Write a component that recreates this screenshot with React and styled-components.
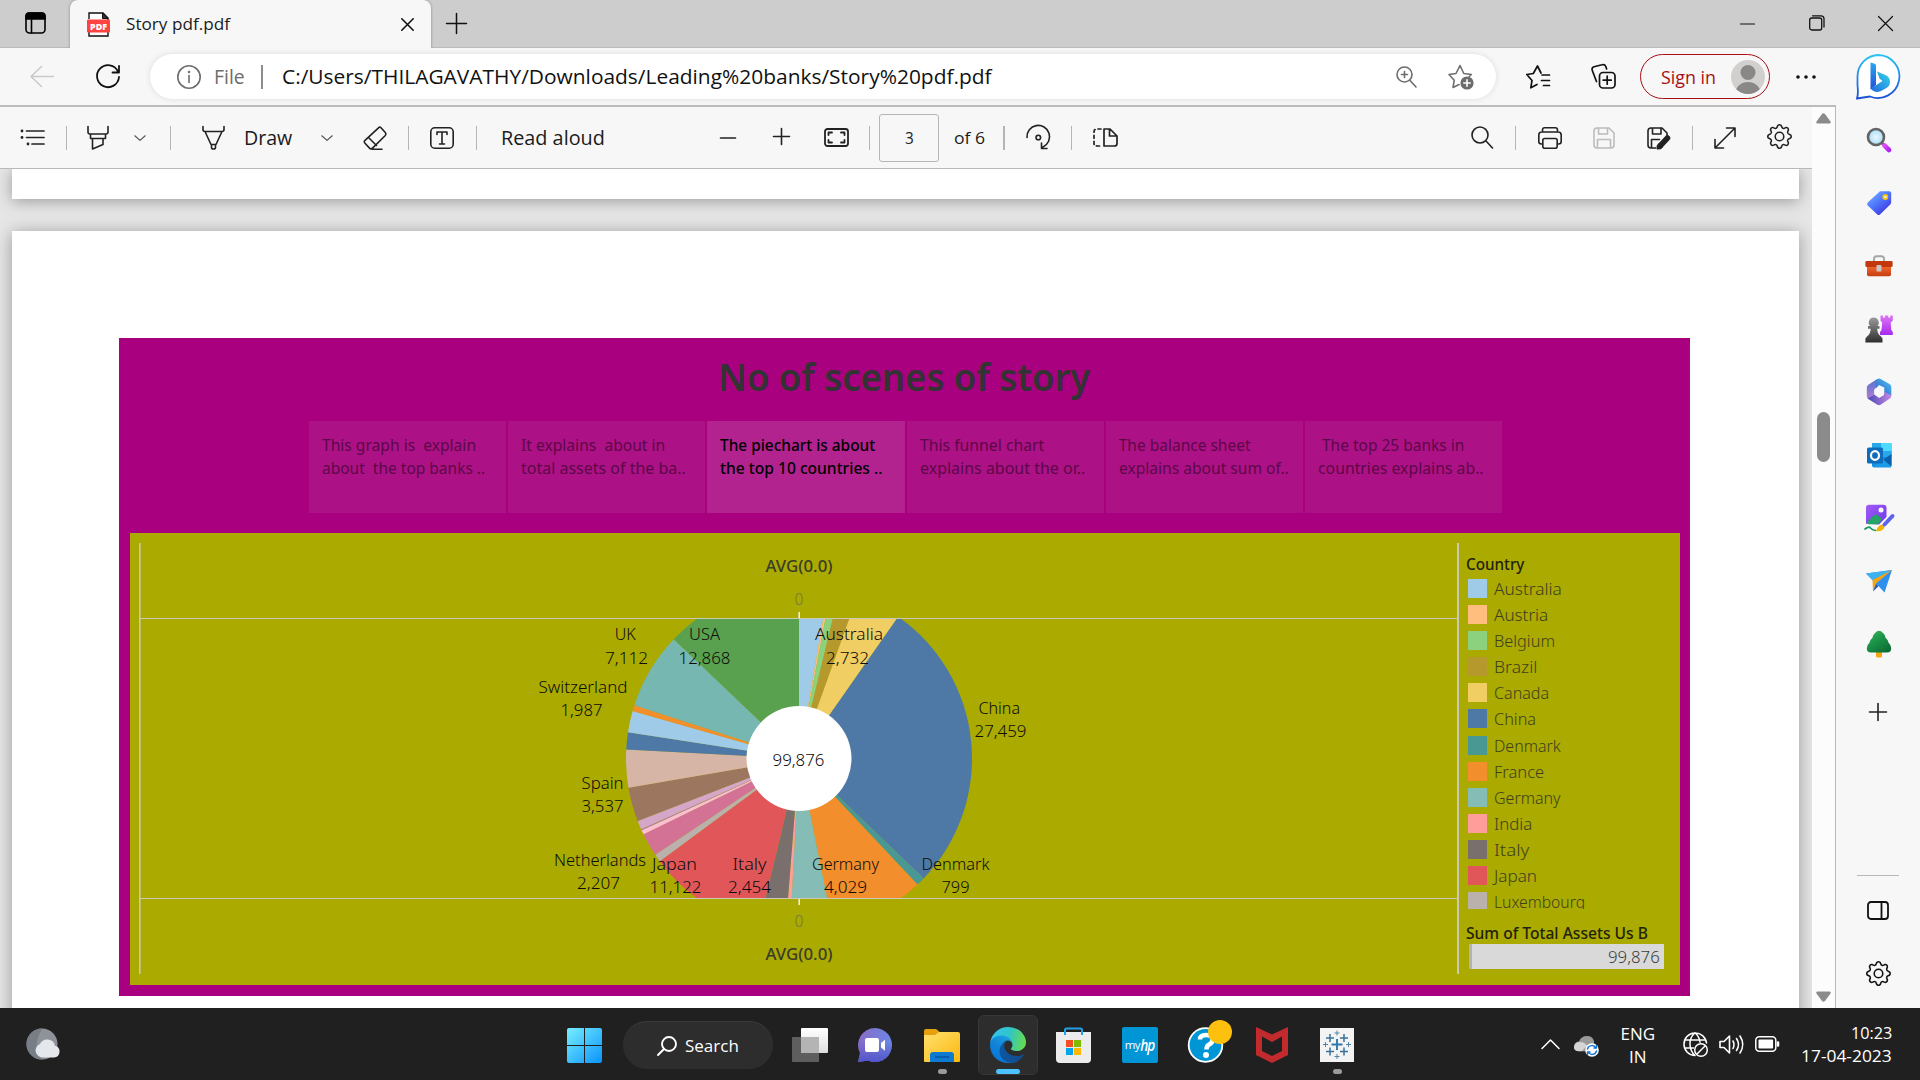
import React, { useLayoutEffect, useRef, useState } from 'react';
import styled, { createGlobalStyle } from 'styled-components';
import { BsGear } from 'react-icons/bs';

const Global = createGlobalStyle`
  * { box-sizing: border-box; }
  html, body { margin: 0; padding: 0; }
  body { width: 1920px; height: 1080px; overflow: hidden; background: #f7f7f7;
    font-family: "Open Sans", "Noto Sans", sans-serif; }
  svg { display: block; flex: none; }
`;

const Screen = styled.div`
  width: 1920px; height: 1080px; display: flex; flex-direction: column; overflow: hidden;
`;

/* ---------- text that condenses to a given measure ---------- */
const FitBox = styled.span`
  display: block; flex: none; white-space: pre; overflow: visible;
  width: ${p => p.$w}px; margin-left: ${p => p.$ml || 0}px; margin-top: ${p => p.$mt || 0}px;
  font-family: ${p => (p.$chart ? '"Noto Sans", "Open Sans", sans-serif' : 'inherit')};
  font-size: ${p => p.$size}px; line-height: ${p => p.$lh || Math.round(p.$size * 1.4)}px;
  font-weight: ${p => p.$weight || 400}; color: ${p => p.$color || '#1b1b1b'};
`;
const FitInner = styled.span`display: inline-block; transform-origin: 0 50%;`;
function Fit({ children, w, ...rest }) {
  const ref = useRef(null);
  const [scale, setScale] = useState(1);
  useLayoutEffect(() => {
    if (ref.current) setScale(w / ref.current.offsetWidth);
  }, [w, children]);
  return (
    <FitBox $w={w} {...rest}>
      <FitInner ref={ref} style={{ transform: `scaleX(${scale})` }}>{children}</FitInner>
    </FitBox>
  );
}

/* ---------- icon wrapper ---------- */
const IconBox = styled.span`
  display: flex; flex: none; width: ${p => p.$w}px; height: ${p => p.$h || p.$w}px;
  margin-left: ${p => p.$ml || 0}px; margin-top: ${p => p.$mt || 0}px; color: ${p => p.$color || '#222'};
  svg { width: 100%; height: 100%; overflow: visible; }
`;
const Ico = ({ w, h = w, ml, mt, color, sw = 1.6, children }) => (
  <IconBox $w={w} $h={h} $ml={ml} $mt={mt} $color={color}>
    <svg viewBox={`0 0 ${w} ${h}`} fill="none" stroke="currentColor" strokeWidth={sw} strokeLinecap="round" strokeLinejoin="round">
      {children}
    </svg>
  </IconBox>
);

/* ---------- title strip ---------- */
const TabStrip = styled.div`
  height: 48px; flex: none; background: #cdcdcd; display: flex; align-items: center;
  border-bottom: 1px solid #bababa;
`;
const Tab = styled.div`
  align-self: stretch; width: 361px; margin: 0 0 -1px 23px; background: #f7f7f7; border-radius: 8px 8px 0 0;
  display: flex; align-items: center; padding: 0 17px; box-shadow: 0 0 3px rgba(0,0,0,.35);
  clip-path: inset(-4px -4px 0 -4px);
`;
const Body = styled.div`height: 960px; flex: none; display: flex; background: #f7f7f7;`;
const Main = styled.div`width: 1836px; flex: none; display: flex; flex-direction: column;`;

/* ---------- address row ---------- */
const AddressRow = styled.div`height: 57px; flex: none; display: flex; align-items: center;`;
const Omnibox = styled.div`
  width: 1346px; height: 45px; margin-left: 30px; border-radius: 23px; background: #fff;
  box-shadow: 0 0 6px rgba(0,0,0,.11); display: flex; align-items: center; padding-left: 27px;
`;
const Rule = styled.span`
  flex: none; width: ${p => p.$t || 1}px; height: 24px; background: ${p => p.$c || '#b5b5b5'}; margin-left: ${p => p.$ml}px;
`;
const SignIn = styled.div`
  width: 130px; height: 45px; margin-left: 24px; border: 1.5px solid #a80f14; border-radius: 23px;
  display: flex; align-items: center; padding-left: 20px;
`;

/* ---------- viewer ---------- */
const Viewer = styled.div`
  flex: 1; min-height: 0; display: flex; border-top: 2px solid #bcbcbc; border-right: 1px solid #b9b9b9;
`;
const DocColumn = styled.div`width: 1812px; flex: none; display: flex; flex-direction: column;`;
const Toolbar = styled.div`
  height: 62px; flex: none; background: #f7f7f7; border-bottom: 1px solid #b9b9b9;
  display: flex; align-items: center;
`;
const PageField = styled.div`
  width: 60px; height: 48px; margin-left: 9px; border: 1px solid #b5b5b5; border-radius: 3px;
  display: flex; align-items: center; justify-content: center;
`;
const Pages = styled.div`
  flex: 1; min-height: 0; overflow: hidden; background: #e6e6e6; padding: 0 13px 0 12px;
  display: flex; flex-direction: column; gap: 32px;
`;
const Sheet = styled.div`
  flex: none; height: ${p => p.$h}px; background: #fff; padding: ${p => p.$pad || 0};
  box-shadow: 0 2px 16px rgba(0,0,0,.34);
`;
const Scrollbar = styled.div`
  width: 23px; flex: none; background: #fcfcfc; display: flex; flex-direction: column; align-items: center;
  padding: 6px 0 6px 0;
`;
const Thumb = styled.div`width: 13px; height: 50px; border-radius: 7px; background: #8b8b8b; margin: 288px 0 auto;`;

/* ---------- story ---------- */
const Story = styled.div`width: 1571px; height: 658px; background: #a9007f; display: flex; flex-direction: column;`;
const StoryTitle = styled.div`height: 83px; padding: 12px 2px 0 0; display: flex; justify-content: center;`;
const Points = styled.div`height: 92px; padding-left: 190px; display: flex; gap: 2px;`;
const Point = styled.div`
  width: 197.2px; flex: none; padding: 13px 0 0 13px; background: ${p => (p.$on ? '#b32390' : '#ad1186')};
`;
const Dash = styled.div`
  width: 1550px; height: 452px; margin: 20px 0 0 11px; background: #aaaa00; display: flex; padding: 10px 0 0 9px;
`;
const Legend = styled.div`width: 200px; margin-left: 7px; padding-top: 10px; display: flex; flex-direction: column;`;
const LegendList = styled.div`height: 334px; overflow: hidden; margin-bottom: 13px;`;
const LegendItem = styled.div`height: 26.17px; display: flex; align-items: center; padding-left: 2px;`;
const Swatch = styled.span`width: 19px; height: 19px; flex: none; background: ${p => p.$c};`;
const Total = styled.div`
  width: 195px; height: 25px; margin-left: 3px; background: #d9d9d9; border-left: 3px solid #b3b3b3;
  display: flex; justify-content: flex-end; align-items: center; padding-right: 4px;
`;

/* ---------- sidebar ---------- */
const Side = styled.div`width: 84px; flex: none; display: flex; flex-direction: column; align-items: center;`;
const BingCell = styled.div`height: 60px; width: 84px; padding: 6px 0 0 20px; flex: none;`;
const SideCell = styled.div`
  height: ${p => p.$h || 63.1}px; width: 84px; flex: none; padding-left: ${p => (p.$flat ? 0 : 2)}px;
  display: flex; align-items: center; justify-content: center;
`;
const SideRule = styled.div`width: 42px; height: 1px; background: #b9b9b9; margin-top: auto;`;

/* ---------- taskbar ---------- */
const Taskbar = styled.div`height: 72px; flex: none; background: #202020; display: flex; align-items: flex-start;`;
const SearchPill = styled.div`
  width: 150px; height: 48px; margin: 13px 0 0 21px; border-radius: 24px; background: #2d2d2d;
  border-top: 1px solid #3b3b3b; display: flex; align-items: center; padding-left: 34px;
`;
const TaskApp = styled.div`
  width: ${p => p.$w || 36}px; margin-left: ${p => p.$ml}px; padding-top: 19px; height: 72px; flex: none;
  display: flex; flex-direction: column; align-items: center;
`;
const ActiveApp = styled.div`
  width: 60px; height: 60px; margin: 7px 0 0 18px; background: #2d2d2d; border: 1px solid #373737; border-radius: 6px;
  display: flex; flex-direction: column; align-items: center; padding-top: 11px; flex: none;
`;
const Pip = styled.span`
  width: ${p => (p.$on ? 24 : 9)}px; height: 5px; border-radius: 3px; flex: none; margin-top: 6px;
  background: ${p => (p.$on ? '#4cc2ff' : '#9a9a9a')};
`;
const MyHp = styled.div`
  width: 36px; height: 36px; background: #0096d6; border-radius: 2px; color: #fff; flex: none;
  display: flex; align-items: center; justify-content: center; line-height: 1;
  font-family: "Open Sans", sans-serif; font-size: 11.5px; letter-spacing: -.6px;
  b { font-style: italic; font-size: 16px; font-weight: 600; letter-spacing: -1.2px; transform: scaleX(.85); margin-left: -1px; }
`;
const TwoLines = styled.div`
  margin: ${p => p.$mt}px 0 0 ${p => p.$ml}px; width: ${p => p.$w}px; display: flex; flex-direction: column; flex: none;
  align-items: ${p => (p.$right ? 'flex-end' : 'center')};
`;

/* ---------- data ---------- */
const SLICES = [
  [0, 9.85, '#a0cbe8'], [9.85, 10.7, '#ffbe7d'], [10.7, 13.6, '#8cd17d'], [13.6, 19.8, '#b6992d'],
  [19.8, 35, '#f1ce63'], [35, 133.9, '#4e79a7'], [133.9, 136.8, '#499894'], [136.8, 168.6, '#f28e2b'],
  [168.6, 183, '#86bcb6'], [183, 184.5, '#ff9d9a'], [184.5, 193.5, '#79706e'], [193.5, 233.6, '#e15759'],
  [233.6, 236.2, '#bab0ac'], [236.2, 244, '#d37295'], [244, 245.5, '#fabfd2'], [245.5, 245.9, '#b07aa1'],
  [245.9, 248.8, '#d4a6c8'], [248.8, 260.3, '#9d7660'], [260.3, 273, '#d7b5a6'], [273, 278.7, '#4e79a7'],
  [278.7, 285.9, '#a0cbe8'], [285.9, 287.9, '#f28e2b'], [287.9, 313.6, '#76b7b2'], [313.6, 360, '#59a14f'],
];
const LABELS = [
  ['UK', 614.7, 21, 639], ['7,112', 605, 43, 663], ['USA', 689, 31, 639], ['12,868', 678.5, 52, 663],
  ['Australia', 815, 68, 639], ['2,732', 826, 43, 663], ['Switzerland', 538.5, 89, 692], ['1,987', 560.5, 42, 715],
  ['China', 978.5, 41.5, 713], ['27,459', 974.5, 52, 736], ['Spain', 581.5, 42, 788], ['3,537', 581.5, 42, 811],
  ['Netherlands', 554, 92, 865], ['2,207', 577, 43, 888], ['Japan', 652, 45, 869], ['11,122', 649.5, 52, 892],
  ['Italy', 732.5, 34, 869], ['2,454', 728, 43, 892], ['Germany', 812, 67, 869], ['4,029', 824, 43, 892],
  ['Denmark', 921.5, 68, 869], ['799', 941.5, 28, 892], ['99,876', 772.5, 52, 765],
];
const COUNTRIES = [
  ['Australia', '#a0cbe8', 68], ['Austria', '#ffbe7d', 54], ['Belgium', '#8cd17d', 61], ['Brazil', '#b6992d', 43],
  ['Canada', '#f1ce63', 55], ['China', '#4e79a7', 42], ['Denmark', '#499894', 67], ['France', '#f28e2b', 50],
  ['Germany', '#86bcb6', 67], ['India', '#ff9d9a', 38], ['Italy', '#79706e', 35], ['Japan', '#e15759', 43],
  ['Luxembourg', '#bab0ac', 91],
];
const POINTS = [
  [['This graph is  explain', 154], ['about  the top banks ..', 163]],
  [['It explains  about in', 144], ['total assets of the ba..', 165]],
  [['The piechart is about', 155], ['the top 10 countries ..', 162]],
  [['This funnel chart', 124], ['explains about the or..', 165]],
  [['The balance sheet', 132], ['explains about sum of..', 170]],
  [['The top 25 banks in', 142, 4], ['countries explains ab..', 166]],
];

const CX = 799, CY = 758.5, R = 173;
const at = d => {
  const t = (d * Math.PI) / 180;
  return `${(CX + R * Math.sin(t)).toFixed(2)} ${(CY - R * Math.cos(t)).toFixed(2)}`;
};
function PieChart() {
  return (
    <svg width="1320" height="432" viewBox="139 543 1320 432" fontFamily='"Noto Sans", "Open Sans", sans-serif' fontSize="15.5">
      <clipPath id="plot"><rect x="141" y="619" width="1316" height="279" /></clipPath>
      <g clipPath="url(#plot)">
        {SLICES.map(([a, b, c]) => (
          <path key={a} fill={c} d={`M${CX} ${CY}L${at(a)}A${R} ${R} 0 0 1 ${at(b)}Z`} />
        ))}
      </g>
      <circle cx={CX} cy={CY} r="52.5" fill="#fff" />
      <g fill="#c9c9b4">
        <rect x="139" y="543" width="1.6" height="431" />
        <rect x="1457" y="543" width="2" height="431" />
        <rect x="140" y="618" width="1317" height="1" />
        <rect x="140" y="898" width="1317" height="1" />
      </g>
      <g fill="#ecece0">
        <rect x="798.4" y="612" width="1.6" height="6" />
        <rect x="798.4" y="899" width="1.6" height="6" />
      </g>
      <g fill="#0c0c0a" fontWeight="300" transform="translate(0 .5)">
        {LABELS.map(([t, x, w, y]) => (
          <text key={t + x} x={x} y={y} textLength={w} lengthAdjust="spacingAndGlyphs">{t}</text>
        ))}
      </g>
      <g fill="#3c3c28" fontWeight="500" transform="translate(0 .5)">
        <text x="765.5" y="571" textLength="67" lengthAdjust="spacingAndGlyphs">AVG(0.0)</text>
        <text x="765.5" y="959" textLength="67" lengthAdjust="spacingAndGlyphs">AVG(0.0)</text>
      </g>
      <g fill="#74744a" fontWeight="300" textAnchor="middle" transform="translate(0 .5)">
        <text x="799" y="604">0</text>
        <text x="799" y="926">0</text>
      </g>
    </svg>
  );
}

/* ---------- reusable glyphs ---------- */
const Chevron = ({ ml }) => <Ico w={12} h={6} ml={ml} sw={1.2} color="#555"><path d="M.8.8 6 5.4 11.2.8" /></Ico>;

const SideIcons = () => (
  <>
    <SideCell>
      <svg width="26" height="26" viewBox="0 0 26 26">
        <defs><radialGradient id="gl"><stop offset="0" stopColor="#e9f8ff" /><stop offset="1" stopColor="#a9dcf7" /></radialGradient>
          <linearGradient id="gh" x1="0" y1="0" x2="1" y2="1"><stop offset="0" stopColor="#e04cf5" /><stop offset="1" stopColor="#b026f0" /></linearGradient></defs>
        <path d="m15.5 15.5 3 3" stroke="#5c5c5c" strokeWidth="3" />
        <path d="m18.5 18.5 4.5 4.5" stroke="url(#gh)" strokeWidth="4.6" strokeLinecap="round" />
        <circle cx="10" cy="10" r="8" fill="url(#gl)" stroke="#636363" strokeWidth="2.6" />
      </svg>
    </SideCell>
    <SideCell>
      <svg width="26" height="26" viewBox="0 0 26 26">
        <defs><linearGradient id="tg" x1="0" y1="0" x2=".8" y2="1"><stop offset="0" stopColor="#7cb8ff" /><stop offset=".5" stopColor="#4f78fb" /><stop offset="1" stopColor="#3a2de0" /></linearGradient></defs>
        <path d="M14 1.2h9.2q2 0 2 2V12q0 1.6-1.2 2.8L14 24.5q-1.3 1.2-2.7 0L1.7 15.4q-1.2-1.3 0-2.8Z" fill="url(#tg)" />
        <circle cx="19.3" cy="7" r="2.1" fill="#e8edff" stroke="#f8c500" strokeWidth="1.7" />
      </svg>
    </SideCell>
    <SideCell>
      <svg width="28" height="24" viewBox="0 0 28 24">
        <defs><linearGradient id="tb" x1="0" y1="0" x2="0" y2="1"><stop offset="0" stopColor="#f26a2e" /><stop offset="1" stopColor="#c63d11" /></linearGradient></defs>
        <path d="M9 7V5q0-2.8 2.5-2.8h5Q19 2.2 19 5v2" fill="none" stroke="#a5a5a5" strokeWidth="1.9" />
        <path d="M2 12h24v8.5q0 1.7-1.7 1.7H3.7Q2 22.2 2 20.5Z" fill="url(#tb)" />
        <rect x=".4" y="7" width="27.2" height="6" rx="1.3" fill="#c2370b" />
        <rect x="11.5" y="11" width="5" height="6.5" rx="1" fill="#c7c7c7" />
      </svg>
    </SideCell>
    <SideCell>
      <svg width="28" height="28" viewBox="0 0 28 28">
        <defs><linearGradient id="ck" x1="0" y1="0" x2="0" y2="1"><stop offset="0" stopColor="#9a9a9a" /><stop offset="1" stopColor="#2e2e2e" /></linearGradient>
          <linearGradient id="cr" x1="0" y1="0" x2="0" y2="1"><stop offset="0" stopColor="#dc76f4" /><stop offset="1" stopColor="#a928ef" /></linearGradient></defs>
        <path d="M15.5.6h2.5v2h2V.6h3.2v2h2V.6h2.6v5.2L25.7 7.5l.6 7.5 1.5 2v3H15v-3l1.5-2 .7-7.5-1.7-1.7Z" fill="url(#cr)" />
        <path d="M8.7 2.6a5 5 0 0 1 3.6 8.5h2.2v2.6h-2.3q.3 5.5 3.3 7.3l2 2.5v4H.4v-4l2-2.5q3-1.8 3.3-7.3H3v-2.6h2.2A5 5 0 0 1 8.7 2.6Z" fill="url(#ck)" />
      </svg>
    </SideCell>
    <SideCell>
      <svg width="26" height="28" viewBox="0 0 26 28">
        <defs><linearGradient id="ma" x1="0" y1="1" x2="1" y2="0"><stop offset="0" stopColor="#4a50b9" /><stop offset=".5" stopColor="#3a8bdc" /><stop offset="1" stopColor="#50c8ef" /></linearGradient>
          <linearGradient id="mc" x1="0" y1="0" x2="0" y2="1"><stop offset="0" stopColor="#4f74d0" /><stop offset="1" stopColor="#b87bd6" /></linearGradient>
          <linearGradient id="mb" x1="0" y1="0" x2="1" y2="0"><stop offset="0" stopColor="#4b48b5" /><stop offset="1" stopColor="#c389e5" /></linearGradient></defs>
        <path d="M11 1.2q2-1.3 4 0l8.5 4.9q1.8 1.1 1.8 3V18l-7-3.8V9.5L13 7 9.500 11 8 4.500Z" fill="url(#ma)" />
        <path d="M11 1.200 2.700 6.500Q.8 7.700.8 9.700V18q0 2 1.500 3l6-2.500V12Q10 9 11 1.200Z" fill="url(#mc)" />
        <path d="M1.500 20.500 9 16.500l4 3.500 5-3 .3-3.600 7 4q0 2.300-1.800 3.400L15 26.500q-2 1.300-4 0Z" fill="url(#mb)" />
        <circle cx="13" cy="14" r="4.8" fill="#f7f7f7" />
      </svg>
    </SideCell>
    <SideCell>
      <svg width="26" height="26" viewBox="0 0 26 26">
        <rect x="6" y="1" width="19.5" height="24" rx="1.5" fill="#1490df" />
        <rect x="15" y="1" width="10.5" height="8" fill="#50d9ff" /><rect x="6" y="1" width="9" height="6" fill="#28a8ea" />
        <rect x="15" y="9" width="10.5" height="6" fill="#28a8ea" />
        <path d="m25.5 12-9 6 9 6Z" fill="#0a60ad" /><path d="M7 25.5 17 17l8.5 8.5Z" fill="#1d9be8" />
        <rect x="1" y="5.5" width="16" height="16" rx="1.5" fill="#0f6cbd" />
        <ellipse cx="9" cy="13.5" rx="4" ry="4.4" fill="none" stroke="#fff" strokeWidth="2.2" />
      </svg>
    </SideCell>
    <SideCell>
      <svg width="30" height="28" viewBox="0 0 30 28" overflow="visible">
        <defs><linearGradient id="dp" x1="0" y1="0" x2="1" y2="1"><stop offset="0" stopColor="#a35af5" /><stop offset="1" stopColor="#6b3bea" /></linearGradient></defs>
        <path d="M5 .8h14.500q3 0 3 3V13L15 20.500l-13 -.8V3.800Q2 .8 5 .8Z" fill="url(#dp)" />
        <path d="M2.500 18.500 10.500 11q1.400-1 2.800 0L18 15l-4 5.300H5Q3 20.300 2.500 18.500Z" fill="#25a565" />
        <circle cx="17" cy="6" r="2.5" fill="#fff" />
        <path d="M1 25q4-3 5.500-1t5 2.500" stroke="#149b62" strokeWidth="1.7" fill="none" strokeLinecap="round" />
        <path d="m20.500 20.500 8-8.500" stroke="#f7f7f7" strokeWidth="6.500" strokeLinecap="round" />
        <path d="M12 27q2-6 6-6.500l2.500 2.500Q19 28 12 27Z" fill="#f2b200" />
        <path d="m20.500 20.500 8-8.500" stroke="#5c63f0" strokeWidth="4" strokeLinecap="round" />
      </svg>
    </SideCell>
    <SideCell>
      <svg width="26" height="24" viewBox="0 0 26 24">
        <path d="M0 4.500 26 1 18.500 23.500l-6.800-7.300Z" fill="#2f8fee" /><path d="M0 4.500 26 1 6.800 11.500Z" fill="#3cb2ee" />
        <path d="M6.500 11 26 1 10 14.500l-3 8Z" fill="#f3a417" /><path d="m7 22.500 3-8 2.500 2.800Z" fill="#245bb5" />
      </svg>
    </SideCell>
    <SideCell>
      <svg width="26" height="28" viewBox="0 0 26 28">
        <defs><linearGradient id="tr" x1="0" y1="0" x2=".7" y2="1"><stop offset="0" stopColor="#55b94a" /><stop offset=".4" stopColor="#1f9a4c" /><stop offset="1" stopColor="#0d6f35" /></linearGradient></defs>
        <rect x="10" y="19" width="6" height="8.500" rx="1.500" fill="#f4a50f" />
        <path d="M9 3Q13-1.500 17 3q2 1.500 2.700 5 2.700 2 3 5 2.500 2 2.500 5.200 0 4.300-4.200 4.300H5Q.8 22.500.8 18.200q0-3.200 2.500-5.200.3-3 3-5Q7 4.500 9 3Z" fill="url(#tr)" />
      </svg>
    </SideCell>
  </>
);

const Edge = () => (
  <svg width="36" height="36" viewBox="0 0 256 256">
    <defs>
      <linearGradient id="e1" x1="60" y1="180" x2="235" y2="180" gradientUnits="userSpaceOnUse"><stop stopColor="#0c59a4" /><stop offset="1" stopColor="#114a8b" /></linearGradient>
      <linearGradient id="e2" x1="150" y1="100" x2="50" y2="230" gradientUnits="userSpaceOnUse"><stop stopColor="#1b9de2" /><stop offset=".5" stopColor="#1284d8" /><stop offset="1" stopColor="#0778d8" /></linearGradient>
      <linearGradient id="e3" x1="10" y1="60" x2="250" y2="110" gradientUnits="userSpaceOnUse"><stop stopColor="#35c1f1" /><stop offset=".5" stopColor="#2fc5c7" /><stop offset="1" stopColor="#66dc4d" /></linearGradient>
    </defs>
    <path fill="url(#e1)" d="M235.700 195.500a94 94 0 0 1-10.600 4.700 102 102 0 0 1-35.900 6.400c-47.300 0-88.500-32.500-88.500-74.300a31.500 31.500 0 0 1 16.400-27.300c-42.800 1.800-53.800 46.400-53.800 72.500 0 73.900 68.100 81.400 82.800 81.400 7.900 0 19.800-2.300 27-4.600l1.300-.4a128.300 128.300 0 0 0 66.600-52.800 4 4 0 0 0-5.300-5.600z" />
    <path fill="url(#e2)" d="M105.700 241.400a79 79 0 0 1-22.700-21.300 80.700 80.700 0 0 1 29.500-120c3.200-1.500 8.500-4.100 15.600-4a32.400 32.400 0 0 1 25.700 13 31.900 31.900 0 0 1 6.300 18.700c0-.2 24.500-79.600-80-79.600-43.900 0-80 41.600-80 78.200a130.200 130.200 0 0 0 12.100 56 128 128 0 0 0 156.400 67 75.600 75.600 0 0 1-62.800-8z" />
    <path fill="url(#e3)" d="M152.300 148.900c-.8 1-3.300 2.500-3.300 5.700 0 2.600 1.700 5.100 4.700 7.200 14.400 10 41.500 8.700 41.600 8.700a59.600 59.600 0 0 0 30.300-8.400 61.400 61.400 0 0 0 30.400-52.900c.3-22.400-8-37.300-11.300-43.900C223.500 23.900 177.700 0 128 0A128 128 0 0 0 0 126.200c.5-36.500 36.800-66 80-66 3.500 0 23.500.3 42 10 16.300 8.600 24.900 19 30.800 29.300 6.200 10.700 7.300 24.100 7.300 29.500s-2.700 13.300-7.800 19.900z" />
  </svg>
);

export default function App() {
  return (
    <Screen>
      <Global />
      <TabStrip>
        <Ico w={22} h={22} ml={25} mt={-1} color="#000"><rect x="1" y="1" width="19" height="20" rx="3.5" /><path d="M1 7V4q0-3 3-3h13q3 0 3 3v3Z" fill="#000" /><path d="M6.500 7v14" /></Ico>
        <Tab>
          <svg width="23" height="25" viewBox="0 0 23 25">
            <path d="M2 7V1h14l5 5v18H2v-6" fill="#fff" stroke="#111" strokeWidth="1.4" /><path d="M15.500 1v5.500H21Z" fill="#333" stroke="#111" />
            <rect x="0" y="7.5" width="23" height="13" rx="1" fill="#ff4343" />
            <text x="3" y="17.600" fontSize="9" fontWeight="800" fill="#fff" fontFamily='"Open Sans", sans-serif' textLength="17" lengthAdjust="spacingAndGlyphs">PDF</text>
          </svg>
          <Fit w={104} $size={16.5} $ml={15.5} $lh={24} $mt={-1}>Story pdf.pdf</Fit>
          <Ico w={13} ml={171} color="#111"><path d="m.8.8 11.400 11.400M12.200.8.8 12.200" /></Ico>
        </Tab>
        <Ico w={21} ml={15} mt={-1} color="#111" sw={1.5}><path d="M10.500.5v20M.5 10.500h20" /></Ico>
        <Ico w={15} ml={1273} mt={-1} color="#111" sw={1.2}><path d="M.5 8h14" /></Ico>
        <Ico w={16} ml={54} mt={-1} color="#111" sw={1.3}><rect x=".7" y="3" width="12" height="12" rx="2" /><path d="M3.500.8h8.500q3 0 3 3V12" /></Ico>
        <Ico w={15} ml={53} mt={-1} color="#111" sw={1.2}><path d="m.5.5 14 14M14.500.5l-14 14" /></Ico>
      </TabStrip>
      <Body>
        <Main>
          <AddressRow>
            <Ico w={24} ml={30} color="#c9c9c9" sw={1.5}><path d="M23.500 11.500H1M11.500 1.500 1 11.500l10.500 10" /></Ico>
            <Ico w={24} ml={42} color="#111" sw={1.8}><path d="M22 6.500A11 11 0 1 0 23 12M23 1v6.500h-6.500" /></Ico>
            <Omnibox>
              <Ico w={24} color="#6d6d6d"><circle cx="12" cy="12" r="11.2" /><path d="M12 10.500v7" /><circle cx="12" cy="7" r=".5" fill="#6d6d6d" /></Ico>
              <Fit w={31} $size={20} $ml={13} $lh={28} $color="#6d6d6d">File</Fit>
              <Rule $ml={16} $c="#8d8d8d" $t={1.5} />
              <Fit w={710} $size={20} $ml={19} $lh={28} $color="#111">C:/Users/THILAGAVATHY/Downloads/Leading%20banks/Story%20pdf.pdf</Fit>
              <Ico w={21} h={22} ml={404} color="#6d6d6d"><circle cx="8.5" cy="8.5" r="7.5" /><path d="m14 14.500 6 6.500M8.500 5.500v6M5.500 8.500h6" /></Ico>
              <Ico w={26} ml={31.5} color="#6d6d6d"><path d="M11 20.500 5 23.500l1.200-7.200L1 10.500l7-1L12 1.500l3.800 8 7.500 1-2 2" /><circle cx="19" cy="19" r="6.6" fill="#6d6d6d" stroke="none" /><path d="M19 15.800v6.400M15.800 19h6.400" stroke="#fff" /></Ico>
            </Omnibox>
            <Ico w={24} ml={30} color="#111" sw={1.7}><path d="M11 19.500 4.800 22.800 6 15.500.8 9.500l6.500-1L11.500 1l3.500 7 M16 10h7.500M15.500 15.500h8M17.500 20.500h6" /></Ico>
            <Ico w={25} ml={41} color="#111" sw={1.7}><rect x="8.5" y="8.5" width="15.5" height="15.5" rx="3.5" /><path d="M16.200 12.200v8M12.200 16.200h8M5.500 17.500 1.300 6.500q-1-2.700 1.700-3.700L11 .8q2.700-.8 3.800 1.700l.8 2.500" /></Ico>
            <SignIn>
              <Fit w={55} $size={17.5} $lh={26} $color="#a80f14">Sign in</Fit>
              <IconBox $w={34} $ml={14.5}>
                <svg viewBox="0 0 34 34"><clipPath id="av"><circle cx="17" cy="17" r="17" /></clipPath><g clipPath="url(#av)"><rect width="34" height="34" fill="#d2d0ce" /><circle cx="17" cy="12.5" r="7.5" fill="#8a8886" /><ellipse cx="17" cy="33" rx="12.5" ry="11" fill="#8a8886" /></g></svg>
              </IconBox>
            </SignIn>
            <Ico w={20} h={4} ml={26} color="#111" sw={0}><g fill="#111"><circle cx="2" cy="2" r="1.8" /><circle cx="10" cy="2" r="1.8" /><circle cx="18" cy="2" r="1.8" /></g></Ico>
          </AddressRow>
          <Viewer>
            <DocColumn>
              <Toolbar>
                <Ico w={25} h={17} ml={20} sw={1.7}><path d="M6.500 2H24M6.500 8.500H24M12 15h12" /><g fill="#222" stroke="none"><circle cx="2" cy="2" r="1.4" /><circle cx="2" cy="8.5" r="1.4" /><circle cx="8" cy="15" r="1.4" /></g></Ico>
                <Rule $ml={21} />
                <Ico w={22} h={24} ml={20}><path d="M1 .5v5.500q0 2 2 2h16q2 0 2-2V.5M3.500 8v4.500h15V8M5.500 12.500V23l10.500-4.500v-6" /></Ico>
                <Chevron ml={25} />
                <Rule $ml={24} />
                <Ico w={23} h={24} ml={31}><path d="M1 .5v3q0 2 2 2h17q2 0 2-2v-3M3 5.500 9 18.500h5l6-13M9.500 18.500v3q0 1.500 2 1.500t2-1.500v-3" /></Ico>
                <Fit w={48} $size={20} $ml={18.5} $lh={28} $mt={1}>Draw</Fit>
                <Chevron ml={29.5} />
                <Ico w={24} h={24} ml={30}><path d="M15.500 1.800 2 14.300q-1.500 1.500 0 3l4.500 4.800q1.500 1.500 3 0L22.300 9.500q1.300-1.500 0-3L18 1.800q-1.300-1.300-2.500 0ZM5.500 11.500l8 8M9 23.200h10" /></Ico>
                <Rule $ml={20.5} />
                <Ico w={24} h={22} ml={21.5}><rect x=".8" y=".8" width="22.4" height="20.4" rx="4" /><path d="M7 7.500V5h10v2.500M12 5v12M9.500 17h5" /></Ico>
                <Rule $ml={22} />
                <Fit w={104} $size={20} $ml={24} $lh={28} $mt={1}>Read aloud</Fit>
                <Ico w={16} h={2} ml={115} sw={1.6}><path d="M.5 1h15" /></Ico>
                <Ico w={17} h={17} ml={37} mt={-2}><path d="M8.500.5v16M.5 8.500h16" /></Ico>
                <Ico w={25} h={19} ml={33.5} sw={1.8}><rect x="1" y="1" width="23" height="17" rx="2.5" /><path d="M4.500 7V4.500H8M17 4.500h3.500V7M20.500 12v2.500H17M8 14.500H4.500V12" /></Ico>
                <Rule $ml={20.5} />
                <PageField><Fit w={9} $size={17} $lh={24}>3</Fit></PageField>
                <Fit w={31} $size={17} $ml={15} $lh={24}>of 6</Fit>
                <Rule $ml={18} $t={1.5} />
                <Ico w={25} h={25} ml={21.5}><path d="M1 12.500a11.300 11.300 0 1 1 16 9.500l-1.500 1.200M15.500 18v5.500h5.500" /><circle cx="12.3" cy="12.5" r="2.3" /></Ico>
                <Rule $ml={20} />
                <Ico w={25} h={19} ml={21} sw={1.7}><path d="M11 1v17h10.500q2.500 0 2.500-2.500V8L17 1ZM16.500 1v7H24" /><path d="M8 1H4Q1 1 1 4v11q0 3 3 3h4" strokeDasharray="3 3" /></Ico>
                <Ico w={22} h={23} ml={353} mt={-1}><circle cx="9" cy="9" r="8" /><path d="m15 15 6.500 7" /></Ico>
                <Rule $ml={22} />
                <Ico w={24} h={22} ml={21.5}><path d="M4.500 5V3q0-2.200 2.200-2.200h10.600Q19.500.8 19.500 3v2M4.500 17H3.500Q.8 17 .8 14.500V8Q.8 5 3.800 5h16.400q3 0 3 3v6.500q0 2.500-2.700 2.500h-1" /><rect x="4.8" y="11.5" width="14.4" height="9.8" rx="2" /></Ico>
                <Ico w={22} h={22} ml={31} color="#bcbcbc"><path d="M1 4q0-3 3-3h12l5 5v12q0 3-3 3H4q-3 0-3-3ZM5.500 1v6h9V1M4.500 21v-8.500h13V21" /></Ico>
                <Ico w={24} h={22} ml={32}><path d="M9 21H4q-3 0-3-3V4q0-3 3-3h11l5 5v3M5.500 1v6h8.500V1M4.500 21v-8.500h8" /><path d="m12.500 19.500 8-8.500" strokeWidth="5.5" /><path d="M10.500 21.800 12 17l3 3.200Z" fill="#222" /></Ico>
                <Rule $ml={21} $t={1.5} />
                <Ico w={22} h={22} ml={21}><path d="M1 21 21 1M12.500 1H21v8.500M1 12.500V21h8.500" /></Ico>
                <IconBox $w={25} $ml={31} $mt={-3}><BsGear /></IconBox>
              </Toolbar>
              <Pages>
                <Sheet $h={30} />
                <Sheet $h={800} $pad="107px">
                  <Story>
                    <StoryTitle><Fit w={372} $chart $size={37.5} $lh={54} $weight={600} $color="#333333">No of scenes of story</Fit></StoryTitle>
                    <Points>
                      {POINTS.map((lines, i) => (
                        <Point key={i} $on={i === 2}>
                          {lines.map(([t, w, ml]) => (
                            <Fit key={t} w={w} $ml={ml} $chart $size={15.5} $lh={23} $weight={i === 2 ? 500 : 400} $color={i === 2 ? '#000' : '#5c0848'}>{t}</Fit>
                          ))}
                        </Point>
                      ))}
                    </Points>
                    <Dash>
                      <PieChart />
                      <Legend>
                        <Fit w={58} $chart $size={15.5} $lh={22} $weight={500} $color="#22220a">Country</Fit>
                        <LegendList>
                          {COUNTRIES.map(([n, c, w]) => (
                            <LegendItem key={n}><Swatch $c={c} /><Fit w={w} $chart $size={15.5} $ml={6.5} $mt={1} $lh={24} $weight={300} $color="#3f3f1f">{n}</Fit></LegendItem>
                          ))}
                        </LegendList>
                        <Fit w={182} $chart $size={15.5} $lh={22} $weight={500} $color="#22220a">Sum of Total Assets Us B</Fit>
                        <Total><Fit w={52} $chart $size={15.5} $mt={1} $lh={22} $weight={300} $color="#3c3c3c">99,876</Fit></Total>
                      </Legend>
                    </Dash>
                  </Story>
                </Sheet>
              </Pages>
            </DocColumn>
            <Scrollbar>
              <svg width="15" height="11" viewBox="0 0 15 11"><path d="M6 1q1.500-1.500 3 0l5.500 7.500q.8 2-1.200 2H1.700q-2 0-1.200-2Z" fill="#8b8b8b" /></svg>
              <Thumb />
              <svg width="15" height="11" viewBox="0 0 15 11"><path d="M6 10q1.500 1.500 3 0l5.500-7.500q.8-2-1.200-2H1.700q-2 0-1.200 2Z" fill="#8b8b8b" /></svg>
            </Scrollbar>
          </Viewer>
        </Main>
        <Side>
          <BingCell>
            <svg width="46" height="46" viewBox="0 0 46 46">
              <defs><linearGradient id="bo" x1="0" y1="0" x2="0" y2="1"><stop offset="0" stopColor="#2bc4f3" /><stop offset="1" stopColor="#1b4fd8" /></linearGradient>
                <linearGradient id="bb" x1="0" y1="0" x2="0" y2="1"><stop offset="0" stopColor="#2aa8f2" /><stop offset="1" stopColor="#1d4fd6" /></linearGradient>
                <linearGradient id="bc" x1="0" y1="1" x2="1" y2="0"><stop offset="0" stopColor="#1f6ae0" /><stop offset="1" stopColor="#35d6e8" /></linearGradient></defs>
              <path d="M22.500 1A21.500 21.500 0 1 1 14 42.500Q7 43.500 1 44.500 2.500 40 1.500 31V22.500A21.500 21.500 0 0 1 22.500 1Z" fill="#fff" stroke="url(#bo)" strokeWidth="1.8" />
              <path d="m14.500 8.500q3 .2 5.500 2.300V31l-5.500 4.500Z" fill="url(#bb)" />
              <path d="M14.500 34.500 20 31.300l6.500-4.300-3-2.500-2.500-7L29.500 21q4.500 2 4.500 7 0 3.800-3.500 6l-6 3.300q-6 2-10-2.800Z" fill="url(#bc)" />
            </svg>
          </BingCell>
          <SideIcons />
          <SideCell $h={72} $flat><Ico w={18} color="#222" sw={1.6}><path d="M9 .5v17M.5 9h17" /></Ico></SideCell>
          <SideRule />
          <SideCell $h={69} $flat><Ico w={22} h={19} color="#111" sw={1.8}><rect x="1" y="1" width="20" height="17" rx="3" /><path d="M14.500 1v17" /></Ico></SideCell>
          <SideCell $h={63} $flat><IconBox $w={25} $color="#111" $mt={-6}><BsGear /></IconBox></SideCell>
        </Side>
      </Body>
      <Taskbar>
        <TaskApp $ml={25} $w={36}>
          <svg width="36" height="34" viewBox="0 0 36 34"><circle cx="17" cy="17" r="15.5" fill="#8d9399" /><path d="M17 1.500a15.500 15.500 0 0 0 0 31Q6 22 17 1.500Z" fill="#777e85" /><path d="M18 30.500h11a6 6 0 0 0 1-11.800 8 8 0 0 0-15-1.700 7 7 0 0 0 3 13.500Z" fill="#e4e8ed" /></svg>
        </TaskApp>
        <TaskApp $ml={506} $w={35}>
          <svg width="35" height="36" viewBox="0 0 35 36"><defs><linearGradient id="wn" x1="0" y1="0" x2="35" y2="36" gradientUnits="userSpaceOnUse"><stop stopColor="#78f0ff" /><stop offset="1" stopColor="#0a93fb" /></linearGradient></defs><path fill="url(#wn)" d="M2 1h15v17H0V3Q0 1 2 1ZM18 1h15q2 0 2 2v15H18ZM0 19h17v17H2q-2 0-2-2ZM18 19h17v15q0 2-2 2H18Z" /></svg>
        </TaskApp>
        <SearchPill>
          <Ico w={20} color="#fff" sw={1.9}><circle cx="12" cy="8" r="7" /><path d="m7 13-6 6" /></Ico>
          <Fit w={54} $size={17} $ml={8} $lh={24} $mt={1} $color="#fff">Search</Fit>
        </SearchPill>
        <TaskApp $ml={19}>
          <svg width="36" height="36" viewBox="0 0 36 36"><defs><linearGradient id="tv" x1="0" y1="0" x2="0" y2="1"><stop offset="0" stopColor="#fff" /><stop offset="1" stopColor="#dedede" /></linearGradient></defs><rect x="9" y="1" width="27" height="25" rx="1" fill="url(#tv)" /><rect x="0" y="10" width="27" height="25" rx="1" fill="#5e5e5e" /><path d="M9 10h18v16H9Z" fill="#b4b4b4" /></svg>
        </TaskApp>
        <TaskApp $ml={30} $w={34}>
          <svg width="34" height="36" viewBox="0 0 34 36"><defs><linearGradient id="tm" x1="0" y1="0" x2="1" y2="0"><stop offset="0" stopColor="#8a6cc4" /><stop offset="1" stopColor="#6a87e6" /></linearGradient><linearGradient id="tm2" x1="0" y1="0" x2="0" y2="1"><stop offset=".4" stopColor="#5558c9" stopOpacity="0" /><stop offset="1" stopColor="#5055cc" /></linearGradient></defs>
            {['tm', 'tm2'].map(g => <path key={g} fill={`url(#${g})`} d="M17 1a17 17 0 1 1-7 32.500L.5 35Q0 35 .3 34L2 26A17 17 0 0 1 17 1Z" />)}
            <rect x="7" y="11" width="14" height="14" rx="2" fill="#fff" /><path d="m23 16 4-3.200v11L23 20.500Z" fill="#fff" /></svg>
        </TaskApp>
        <TaskApp $ml={32}>
          <svg width="36" height="36" viewBox="0 0 36 36"><defs><linearGradient id="fo" x1="0" y1="0" x2="1" y2="1"><stop offset="0" stopColor="#ffdf6e" /><stop offset="1" stopColor="#fbb90e" /></linearGradient></defs><path d="M0 4q0-2 2-2h9q1.500 0 2.500 1l3 3v5H0Z" fill="#e5a00d" /><path d="M0 8h11l4-3h19q2 0 2 2v27q0 1-1 1H1q-1 0-1-1Z" fill="url(#fo)" /><path d="M6 35v-7q0-3 3-3h18q3 0 3 3v7Z" fill="#0f7bd0" /><path d="M11 30h14" stroke="#07529c" strokeWidth="1.5" /></svg>
          <Pip />
        </TaskApp>
        <ActiveApp><Edge /><Pip $on /></ActiveApp>
        <TaskApp $ml={18} $w={35}>
          <svg width="35" height="36" viewBox="0 0 35 36"><path d="M9 8V3q0-1.500 1.500-1.500h14Q26 1.500 26 3v5" fill="none" stroke="#22a0e6" strokeWidth="2" /><path d="M0 5h35v27q0 4-4 4H4q-4 0-4-4Z" fill="#ececec" /><path d="M9 5v3M26 5v3" stroke="#22a0e6" strokeWidth="2" /><path d="M10 13h7v7h-7Z" fill="#f25022" /><path d="M18 13h7v7h-7Z" fill="#7fba00" /><path d="M10 21h7v7h-7Z" fill="#00a4ef" /><path d="M18 21h7v7h-7Z" fill="#ffb900" /></svg>
        </TaskApp>
        <TaskApp $ml={31}><MyHp>my<b>hp</b></MyHp></TaskApp>
        <TaskApp $ml={30}>
          <svg width="36" height="36" viewBox="0 0 36 36" overflow="visible"><circle cx="17.5" cy="18" r="16.8" fill="#0096d6" stroke="#fff" strokeWidth="1.8" /><path d="M12 12.500q0-4.500 6-4.500 6.500 0 6.500 4.700 0 3.300-4 5.300-2 1.200-2 4.500" stroke="#fff" strokeWidth="4.5" fill="none" /><circle cx="18" cy="28" r="3" fill="#fff" /><circle cx="32" cy="5" r="12" fill="#fdc00f" /></svg>
        </TaskApp>
        <TaskApp $ml={32} $w={32}>
          <svg width="32" height="36" viewBox="0 0 32 36"><path fillRule="evenodd" fill="#c12b2d" d="m0 0 16 7.500L32 0v28l-16 8-16-8Zm6 9.500v14.500l10 5 10-5V9.500L16 15Z" /></svg>
        </TaskApp>
        <TaskApp $ml={32} $w={34}>
          <svg width="34" height="36" viewBox="0 0 34 36"><rect x="0" y="1" width="34" height="34" fill="#f3f3f3" /><path d="M11.500 17.500h11M17 12v11" stroke="#2e79ad" strokeWidth="1.9" /><path d="M6 11h8M10 7v8M20 11h8M24 7v8M6 24.500h8M10 20.500v8M20 24.500h8M24 20.500v8" stroke="#38719c" strokeWidth="1.5" /><path d="M14.500 6h5M17 3.500v5M14.500 29.500h5M17 27v5M3 17.500h5M5.500 15v5M26 17.500h5M28.500 15v5" stroke="#4f86ab" /></svg>
          <Pip />
        </TaskApp>
        <Ico w={19} h={10} ml={187} mt={31} color="#fff" sw={1.5}><path d="M1 9.500 9.500 1 18 9.500" /></Ico>
        <Ico w={26} h={22} ml={14} mt={27} sw={0}><path d="M5 16.500a5 5 0 0 1 0-10Q7 1 13 1q5.500 0 7 5v10Z" fill="#999" /><path d="M0 12q1-5 6-5 5 0 7 4l-5 5H4q-4 0-4-4Z" fill="#d5d5d5" /><circle cx="18" cy="15" r="6.8" fill="#fff" /><path d="M13.500 14a4.600 4.600 0 0 1 8.500-1M22.500 16a4.600 4.600 0 0 1-8.500 1M22.500 10.500V13H20M13.500 19.500V17H16" fill="none" stroke="#1573cf" strokeWidth="1.4" /></Ico>
        <TwoLines $ml={20} $w={36} $mt={14}>
          <Fit w={35} $size={17} $lh={23} $color="#fff">ENG</Fit>
          <Fit w={18} $size={17} $lh={23} $color="#fff">IN</Fit>
        </TwoLines>
        <Ico w={25} h={25} ml={26.5} mt={24} color="#fff" sw={1.5}><path d="M12 23.500A11.300 11.300 0 1 1 23.500 11M1.500 8h21M1.500 16h9M12 .8q-5.500 5-5 11.500.2 7 5 11.200M12 .8q4.500 4 5 9.500" /><circle cx="18" cy="18" r="6.3" fill="#202020" /><path d="m14 22 8-8" /></Ico>
        <Ico w={25} h={21} ml={11.5} mt={26} color="#fff" sw={1.6}><path d="M1 7.500h4L10.500 2v17L5 13.500H1ZM14 7q2 3.500 0 7.500M17.500 4.500q4 6 0 12M21 2q5.500 8.500 0 17" /></Ico>
        <Ico w={25} h={17} ml={11} mt={28} color="#fff" sw={1.5}><rect x=".8" y=".8" width="20" height="14.5" rx="3.5" /><rect x="3.5" y="3.5" width="14.6" height="9" rx="1" fill="#fff" stroke="none" /><path d="M23 6.500v3" strokeWidth="2.5" /></Ico>
        <TwoLines $ml={20.5} $w={91} $mt={13} $right>
          <Fit w={41} $size={17} $lh={23} $color="#fff">10:23</Fit>
          <Fit w={91} $size={17} $lh={23} $color="#fff">17-04-2023</Fit>
        </TwoLines>
      </Taskbar>
    </Screen>
  );
}
